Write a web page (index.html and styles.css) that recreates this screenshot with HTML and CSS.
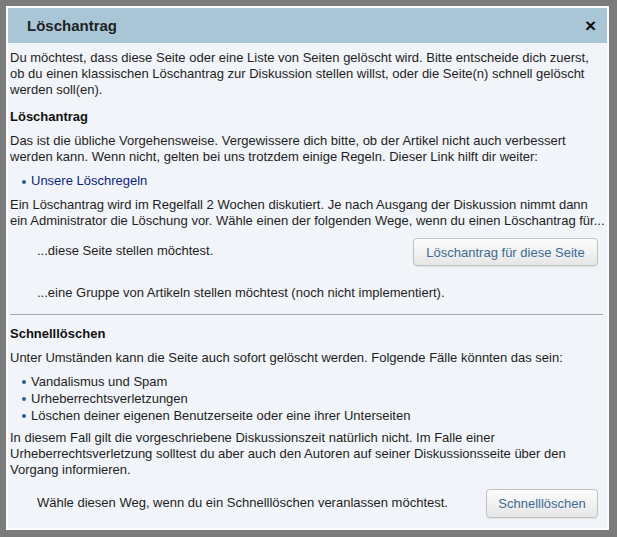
FILE: index.html
```html
<!DOCTYPE html>
<html lang="de">
<head>
<meta charset="utf-8">
<title>Löschantrag</title>
<link rel="stylesheet" href="styles.css">
</head>
<body>
<div class="dialog">
  <div class="titlebar">
    <span class="title">Löschantrag</span>
    <span class="close">×</span>
  </div>
  <div class="content">
    <p class="intro">Du möchtest, dass diese Seite oder eine Liste von Seiten gelöscht wird. Bitte entscheide dich zuerst, ob du einen klassischen Löschantrag zur Diskussion stellen willst, oder die Seite(n) schnell gelöscht werden soll(en).</p>

    <h3 class="heading first">Löschantrag</h3>
    <p class="para">Das ist die übliche Vorgehensweise. Vergewissere dich bitte, ob der Artikel nicht auch verbessert werden kann. Wenn nicht, gelten bei uns trotzdem einige Regeln. Dieser Link hilft dir weiter:</p>
    <ul class="list links">
      <li><a class="link" href="#">Unsere Löschregeln</a></li>
    </ul>
    <p class="para">Ein Löschantrag wird im Regelfall 2 Wochen diskutiert. Je nach Ausgang der Diskussion nimmt dann ein Administrator die Löschung vor. Wähle einen der folgenden Wege, wenn du einen Löschantrag für...</p>
    <div class="option opt1">
      <span class="option-text">...diese Seite stellen möchtest.</span>
      <button class="btn btn-wide" type="button">Löschantrag für diese Seite</button>
    </div>
    <div class="option opt2">
      <span class="option-text">...eine Gruppe von Artikeln stellen möchtest (noch nicht implementiert).</span>
    </div>
    <hr class="divider">
    <h3 class="heading">Schnelllöschen</h3>
    <p class="para">Unter Umständen kann die Seite auch sofort gelöscht werden. Folgende Fälle könnten das sein:</p>
    <ul class="list cases">
      <li>Vandalismus und Spam</li>
      <li>Urheberrechtsverletzungen</li>
      <li>Löschen deiner eigenen Benutzerseite oder eine ihrer Unterseiten</li>
    </ul>
    <p class="para">In diesem Fall gilt die vorgeschriebene Diskussionszeit natürlich nicht. Im Falle einer Urheberrechtsverletzung solltest du aber auch den Autoren auf seiner Diskussionsseite über den Vorgang informieren.</p>
    <div class="option opt3">
      <span class="option-text">Wähle diesen Weg, wenn du ein Schnelllöschen veranlassen möchtest.</span>
      <button class="btn btn-small" type="button">Schnelllöschen</button>
    </div>
  </div>
</div>
</body>
</html>
```

FILE: styles.css
```css
* { box-sizing: border-box; }

html, body {
  margin: 0;
  padding: 0;
}

body {
  background: #7b7b7b;
  font-family: "Liberation Sans", Arial, sans-serif;
  font-size: 13px;
  line-height: 16px;
  color: #1e1e1e;
  padding: 6px 8px 0 6px;
  height: 537px;
  overflow: hidden;
}

.dialog {
  width: 603px;
  height: 524px;
  background: #f1f4f8;
  border: 2px solid #fbfcfd;
  display: flex;
  flex-direction: column;
}

.titlebar {
  height: 35px;
  flex: none;
  background: #a9c6d6;
  display: flex;
  align-items: center;
  justify-content: space-between;
  padding: 0 11px 0 19px;
}

.title {
  font-size: 15px;
  font-weight: bold;
  color: #222;
  padding-top: 1px;
}

.close {
  font-size: 19px;
  font-weight: bold;
  color: #111;
  padding-top: 1px;
}

.content {
  padding: 7px 0 0 2px;
}

p { margin: 0; }

.intro {
  padding-right: 8px;
}

.heading {
  font-size: 13px;
  font-weight: bold;
  margin: 11px 0 8px 0;
  line-height: 16px;
  color: #111;
}

.list {
  margin: 8px 0 8px 0;
  padding: 0 0 0 21px;
  list-style: none;
}

.list li {
  position: relative;
}

.list li::before {
  content: "";
  position: absolute;
  left: -9px;
  top: 7px;
  width: 4px;
  height: 4px;
  border-radius: 50%;
  background: #2b5f8e;
}

.cases {
  margin: 7px 0 6px 0;
}

.cases li {
  line-height: 17px;
}

.link {
  color: #0b1f80;
  text-decoration: none;
}

.option {
  display: flex;
  align-items: center;
  justify-content: space-between;
  padding-left: 27px;
  padding-right: 9px;
}

.opt1 {
  margin-top: 9px;
  height: 28px;
}

.opt2 {
  margin-top: 14px;
  height: 28px;
}

.opt3 {
  margin-top: 11px;
  height: 29px;
}

.option-text {
  padding-bottom: 2px;
}

.btn {
  font-family: "Liberation Sans", Arial, sans-serif;
  font-size: 13px;
  color: #3d6b95;
  background: linear-gradient(#fdfdfd, #e6e6e6);
  border: 1px solid #c2c2c2;
  border-radius: 4px;
  height: 100%;
  padding: 0 8px;
  white-space: nowrap;
  box-shadow: 0 1px 1px rgba(0,0,0,0.08);
}

.btn-wide { width: 185px; }
.btn-small { width: 112px; }

.divider {
  border: none;
  border-top: 1px solid #a3a7ab;
  margin: 6px 4px 5px 0;
  height: 0;
}
```
